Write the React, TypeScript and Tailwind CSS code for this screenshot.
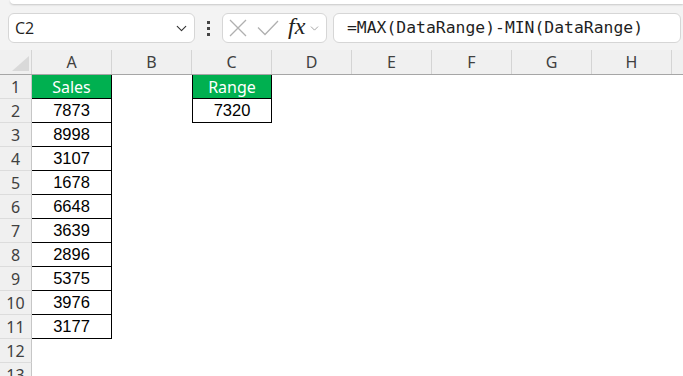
import React from "react";
import { ChevronDown } from "lucide-react";

const columns = ["A", "B", "C", "D", "E", "F", "G", "H", ""];
const sales = [7873, 8998, 3107, 1678, 6648, 3639, 2896, 5375, 3976, 3177];

function NameBox() {
  return (
    <div className="w-[187px] h-[30px] bg-white border border-[#d6d6d6] rounded-[6px] flex items-center justify-between pl-[6px] pr-[4px]">
      <span className="text-[16px] text-[#1f1f1f] font-['Open_Sans',sans-serif]">C2</span>
      <ChevronDown size={17} strokeWidth={1.6} className="text-[#333]" />
    </div>
  );
}

function FormulaControls() {
  return (
    <div className="w-[105px] h-[30px] bg-white border border-[#d6d6d6] rounded-[6px] flex items-center pl-[6px]">
      <svg width="18" height="18" viewBox="0 0 18 18" className="shrink-0">
        <path d="M1 1 L17 17 M17 1 L1 17" stroke="#b0b0b0" strokeWidth="1.3" fill="none" />
      </svg>
      <svg width="22" height="16" viewBox="0 0 22 16" className="shrink-0 ml-[10px]">
        <path d="M1 7.5 L8 14.5 L21 1" stroke="#b0b0b0" strokeWidth="1.3" fill="none" />
      </svg>
      <span className="ml-[9px] text-[24px] italic text-[#222] font-['Liberation_Serif',serif] leading-none -mt-[4px]">
        fx
      </span>
      <ChevronDown size={13} strokeWidth={1.4} className="text-[#8a8a8a] ml-[3px] shrink-0" />
    </div>
  );
}

function Toolbar() {
  return (
    <div className="h-[50px] bg-[#f3f3f3]">
      <div className="h-[4px] ml-[10px] bg-white rounded-bl-[6px] shadow-[0_1px_2px_rgba(0,0,0,0.18)]" />
      <div className="flex items-center pl-[8px] pt-[9px]">
        <NameBox />
        <div className="w-[27px] flex flex-col items-center gap-[3px]">
          <div className="w-[3px] h-[3px] bg-[#444]" />
          <div className="w-[3px] h-[3px] bg-[#444]" />
          <div className="w-[3px] h-[3px] bg-[#444]" />
        </div>
        <FormulaControls />
        <div className="flex-1 ml-[6px] mr-[2px] h-[30px] bg-white border border-[#d6d6d6] rounded-[6px] flex items-center pl-[13px]">
          <span className="text-[16.4px] text-[#1f1f1f] font-['DejaVu_Sans_Mono',monospace]">
            =MAX(DataRange)-MIN(DataRange)
          </span>
        </div>
      </div>
    </div>
  );
}

function ColumnHeader() {
  return (
    <div className="flex h-[25px] bg-[#f0f0f0] border-b border-[#a6a6a6]">
      <div className="w-[32px] shrink-0 relative border-r border-[#d4d4d4]">
        <div className="absolute right-[2px] bottom-[3px] w-0 h-0 border-l-[17px] border-l-transparent border-b-[15px] border-b-[#d9d9d9]" />
      </div>
      {columns.map((c, i) => (
        <div
          key={i}
          className="w-[80px] shrink-0 border-r border-[#d4d4d4] flex items-center justify-center text-[16px] text-[#404040] font-['Noto_Sans',sans-serif]"
        >
          {c}
        </div>
      ))}
    </div>
  );
}

function Row({ n }: { n: number }) {
  const a = n === 1 ? "Sales" : n <= 11 ? String(sales[n - 2]) : "";
  const c = n === 1 ? "Range" : n === 2 ? "7320" : "";
  const header = "bg-[#00b050] text-white font-['Noto_Sans',sans-serif] text-[16px]";
  const value = "text-black font-['Liberation_Sans',sans-serif] text-[16.5px]";
  return (
    <div className="flex h-[24px]">
      <div className="w-[32px] shrink-0 bg-[#f0f0f0] border-r border-b border-r-[#c6c6c6] border-b-[#dcdcdc] flex items-center justify-center text-[16px] text-[#404040] font-['Noto_Sans',sans-serif]">
        {n}
      </div>
      {n <= 11 ? (
        <div
          className={`w-[80px] shrink-0 border-r border-b border-black flex items-center justify-center ${n === 1 ? header : value}`}
        >
          {a}
        </div>
      ) : (
        <div className="w-[80px] shrink-0" />
      )}
      <div className="w-[80px] shrink-0" />
      {n <= 2 ? (
        <div
          className={`w-[80px] shrink-0 border-l border-r border-b border-black flex items-center justify-center ${n === 1 ? header : value}`}
        >
          {c}
        </div>
      ) : (
        <div className="w-[80px] shrink-0" />
      )}
    </div>
  );
}

export default function App() {
  const rows = Array.from({ length: 13 }, (_, i) => i + 1);
  return (
    <div className="w-[683px] h-[376px] overflow-hidden bg-white">
      <Toolbar />
      <ColumnHeader />
      {rows.map((n) => (
        <Row key={n} n={n} />
      ))}
    </div>
  );
}
